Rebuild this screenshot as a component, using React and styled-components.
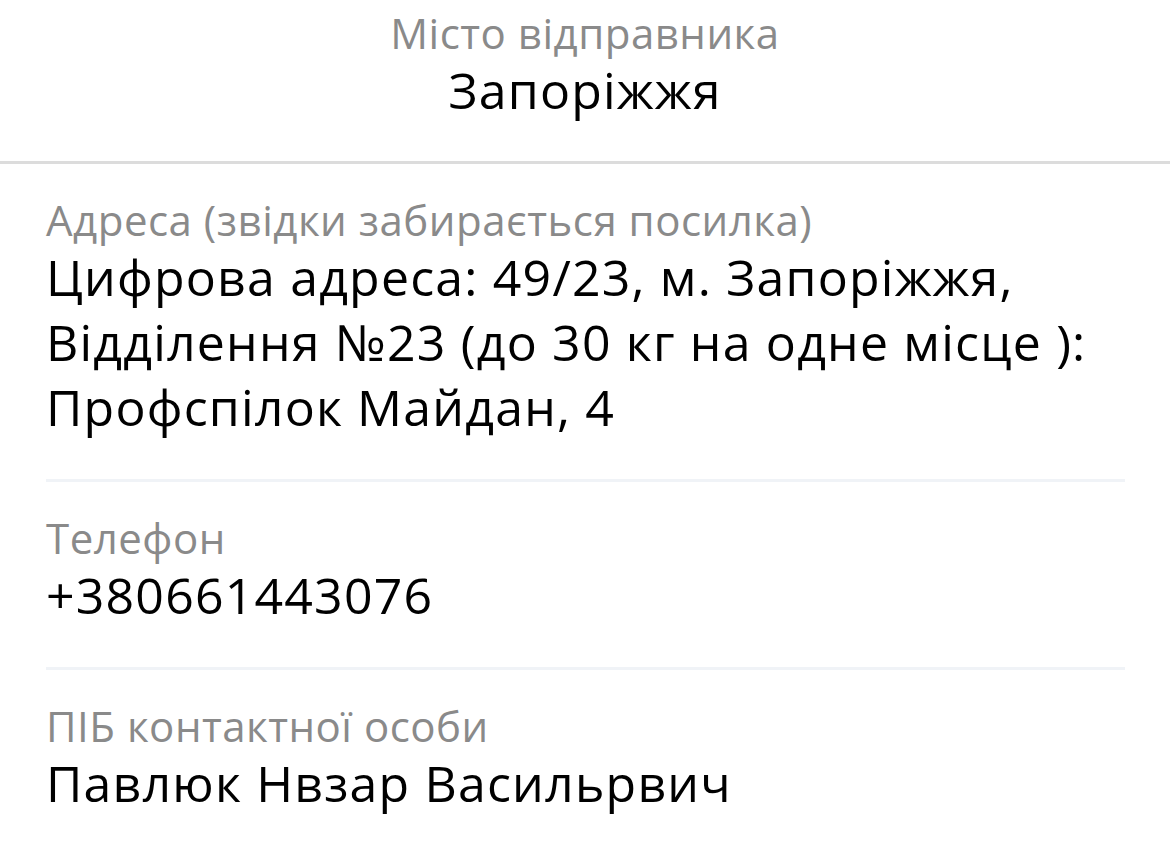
import React from "react";
import styled, { createGlobalStyle } from "styled-components";

const GlobalStyle = createGlobalStyle`
  html, body {
    margin: 0;
    padding: 0;
    background: #fff;
  }
  body {
    font-family: "Open Sans", "Noto Sans", sans-serif;
    -webkit-font-smoothing: antialiased;
  }
`;

const sender = {
  city: "Запоріжжя",
  fields: [
    {
      label: "Адреса (звідки забирається посилка)",
      value:
        "Цифрова адреса: 49/23, м. Запоріжжя, Відділення №23 (до 30 кг на одне місце ): Профспілок Майдан, 4",
    },
    { label: "Телефон", value: "+380661443076" },
    { label: "ПІБ контактної особи", value: "Павлюк Нвзар Васильрвич" },
  ],
};

const App = () => {
  return (
    <>
      <GlobalStyle />
      <Page>
        <Header>
          <Label>Місто відправника</Label>
          <Value>{sender.city}</Value>
        </Header>
        <List>
          {sender.fields.map((f, i) => (
            <Field key={f.label} last={i === sender.fields.length - 1}>
              <Label>{f.label}</Label>
              <Value>{f.value}</Value>
            </Field>
          ))}
        </List>
      </Page>
    </>
  );
};

export default App;

const Page = styled.div`
  width: 1170px;
  min-height: 845px;
  background: #fff;
`;

const Header = styled.div`
  display: flex;
  flex-direction: column;
  align-items: center;
  padding: 8px 0 38px;
  border-bottom: 3px solid #dcdcdc;
  text-align: center;
`;

const List = styled.div`
  padding: 0 45px 0 46px;
`;

const Field = styled.div`
  display: flex;
  flex-direction: column;
  padding: 31px 0 39px;
  border-bottom: ${(p) => (p.last ? "none" : "3px solid #f0f3f7")};
`;

const Label = styled.div`
  font-size: 42px;
  line-height: 50px;
  letter-spacing: 0.5px;
  color: #8a8a8a;
`;

const Value = styled.div`
  font-size: 50px;
  line-height: 65px;
  letter-spacing: 1.2px;
  color: #000;
`;
